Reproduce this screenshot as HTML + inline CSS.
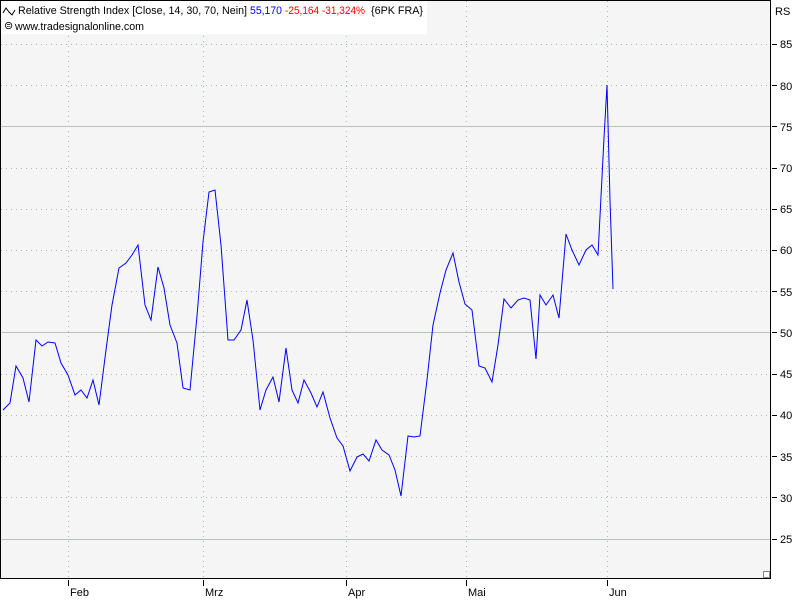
<!DOCTYPE html>
<html><head><meta charset="utf-8"><style>
html,body{margin:0;padding:0;background:#fff;width:800px;height:600px;overflow:hidden}
svg{display:block}
text{font-family:"Liberation Sans",sans-serif;font-size:11px}
</style></head><body>
<svg width="800" height="600" xmlns="http://www.w3.org/2000/svg">
<rect x="0" y="0" width="800" height="600" fill="#fff"/>
<rect x="1" y="1" width="769" height="577" fill="#f5f5f5"/>
<g stroke="#a8bca8" stroke-width="1" stroke-dasharray="1,4">
<line x1="1" y1="44.5" x2="770" y2="44.5"/>
<line x1="1" y1="85.5" x2="770" y2="85.5"/>
<line x1="1" y1="168.5" x2="770" y2="168.5"/>
<line x1="1" y1="209.5" x2="770" y2="209.5"/>
<line x1="1" y1="250.5" x2="770" y2="250.5"/>
<line x1="1" y1="291.5" x2="770" y2="291.5"/>
<line x1="1" y1="374.5" x2="770" y2="374.5"/>
<line x1="1" y1="415.5" x2="770" y2="415.5"/>
<line x1="1" y1="456.5" x2="770" y2="456.5"/>
<line x1="1" y1="497.5" x2="770" y2="497.5"/>
<line x1="68.5" y1="1" x2="68.5" y2="578"/>
<line x1="203.5" y1="1" x2="203.5" y2="578"/>
<line x1="346.5" y1="1" x2="346.5" y2="578"/>
<line x1="466.5" y1="1" x2="466.5" y2="578"/>
<line x1="607.5" y1="1" x2="607.5" y2="578"/>
</g>
<g stroke="#b0c8b0" stroke-width="1">
<line x1="1" y1="126.5" x2="770" y2="126.5"/>
<line x1="1" y1="332.5" x2="770" y2="332.5"/>
<line x1="1" y1="539.5" x2="770" y2="539.5"/>
</g>
<rect x="0.5" y="0.5" width="770" height="578" fill="none" stroke="#000"/>
<rect x="1" y="1" width="426" height="33" fill="#fff"/>
<polyline fill="none" stroke="#0000ff" stroke-width="1" points="3,410 10,403 16,366 23,378 29,402 36,340 42,346 48,342 55,343 61,363 68,375 75,395 81,390 87,398 93,380 99,405 106,350 112,305 119,268 126,263 132,255 138,245 145,305 151,320 158,267 164,288 170,325 177,343 183,388 190,390 197,316 203,242 209,192 215,190 221,245 228,340 234,340 241,330 247,300 253,340 260,410 266,390 273,377 279,402 286,348 292,390 298,403 304,380 311,393 317,407 323,392 330,418 337,438 343,446 350,471 357,457 363,454 369,461 376,440 382,450 389,455 395,470 401,496 408,436 414,437 420,436 427,380 433,325 440,293 446,270 453,253 459,282 465,304 472,310 479,366 485,368 492,382 498,345 504,299 511,308 518,300 524,298 530,300 536,359 540,295 546,305 553,295 559,318 566,234 572,250 579,265 586,250 592,245 598,255 604,138 607,85 610,200 613,289"/>
<path d="M3,13 L6,8 L9,12 L12,15 L15,10" fill="none" stroke="#000"/>
<text x="18" y="14" fill="#000" textLength="229" lengthAdjust="spacingAndGlyphs">Relative Strength Index [Close, 14, 30, 70, Nein]</text>
<text x="250" y="14" fill="#0000ff" textLength="32" lengthAdjust="spacingAndGlyphs">55,170</text>
<text x="285" y="14" fill="#ff0000" textLength="80" lengthAdjust="spacingAndGlyphs">-25,164 -31,324%</text>
<text x="371" y="14" fill="#000" textLength="52" lengthAdjust="spacingAndGlyphs">{6PK FRA}</text>
<text x="4" y="29" fill="#000" font-size="9">⊜</text>
<text x="15" y="30" fill="#000" textLength="129" lengthAdjust="spacingAndGlyphs">www.tradesignalonline.com</text>
<g fill="#000">
<text x="775" y="15">RS</text>
<text x="780" y="48">85</text><text x="780" y="90">80</text><text x="780" y="131">75</text>
<text x="780" y="172">70</text><text x="780" y="213">65</text><text x="780" y="254">60</text>
<text x="780" y="296">55</text><text x="780" y="337">50</text><text x="780" y="378">45</text>
<text x="780" y="419">40</text><text x="780" y="461">35</text><text x="780" y="502">30</text>
<text x="780" y="543">25</text>
</g>
<g stroke="#000">
<line x1="772" y1="44.5" x2="777" y2="44.5"/><line x1="772" y1="85.5" x2="777" y2="85.5"/>
<line x1="772" y1="126.5" x2="777" y2="126.5"/><line x1="772" y1="168.5" x2="777" y2="168.5"/>
<line x1="772" y1="209.5" x2="777" y2="209.5"/><line x1="772" y1="250.5" x2="777" y2="250.5"/>
<line x1="772" y1="291.5" x2="777" y2="291.5"/><line x1="772" y1="332.5" x2="777" y2="332.5"/>
<line x1="772" y1="374.5" x2="777" y2="374.5"/><line x1="772" y1="415.5" x2="777" y2="415.5"/>
<line x1="772" y1="456.5" x2="777" y2="456.5"/><line x1="772" y1="497.5" x2="777" y2="497.5"/>
<line x1="772" y1="539.5" x2="777" y2="539.5"/>
<line x1="68.5" y1="580" x2="68.5" y2="586"/><line x1="203.5" y1="580" x2="203.5" y2="586"/>
<line x1="346.5" y1="580" x2="346.5" y2="586"/><line x1="466.5" y1="580" x2="466.5" y2="586"/>
<line x1="607.5" y1="580" x2="607.5" y2="586"/>
</g>
<rect x="763.5" y="571.5" width="6" height="6" fill="#fff" stroke="#888"/>
<g fill="#000">
<text x="70" y="596">Feb</text><text x="205" y="596">Mrz</text><text x="348" y="596">Apr</text>
<text x="468" y="596">Mai</text><text x="609" y="596">Jun</text>
</g>
</svg>
</body></html>
